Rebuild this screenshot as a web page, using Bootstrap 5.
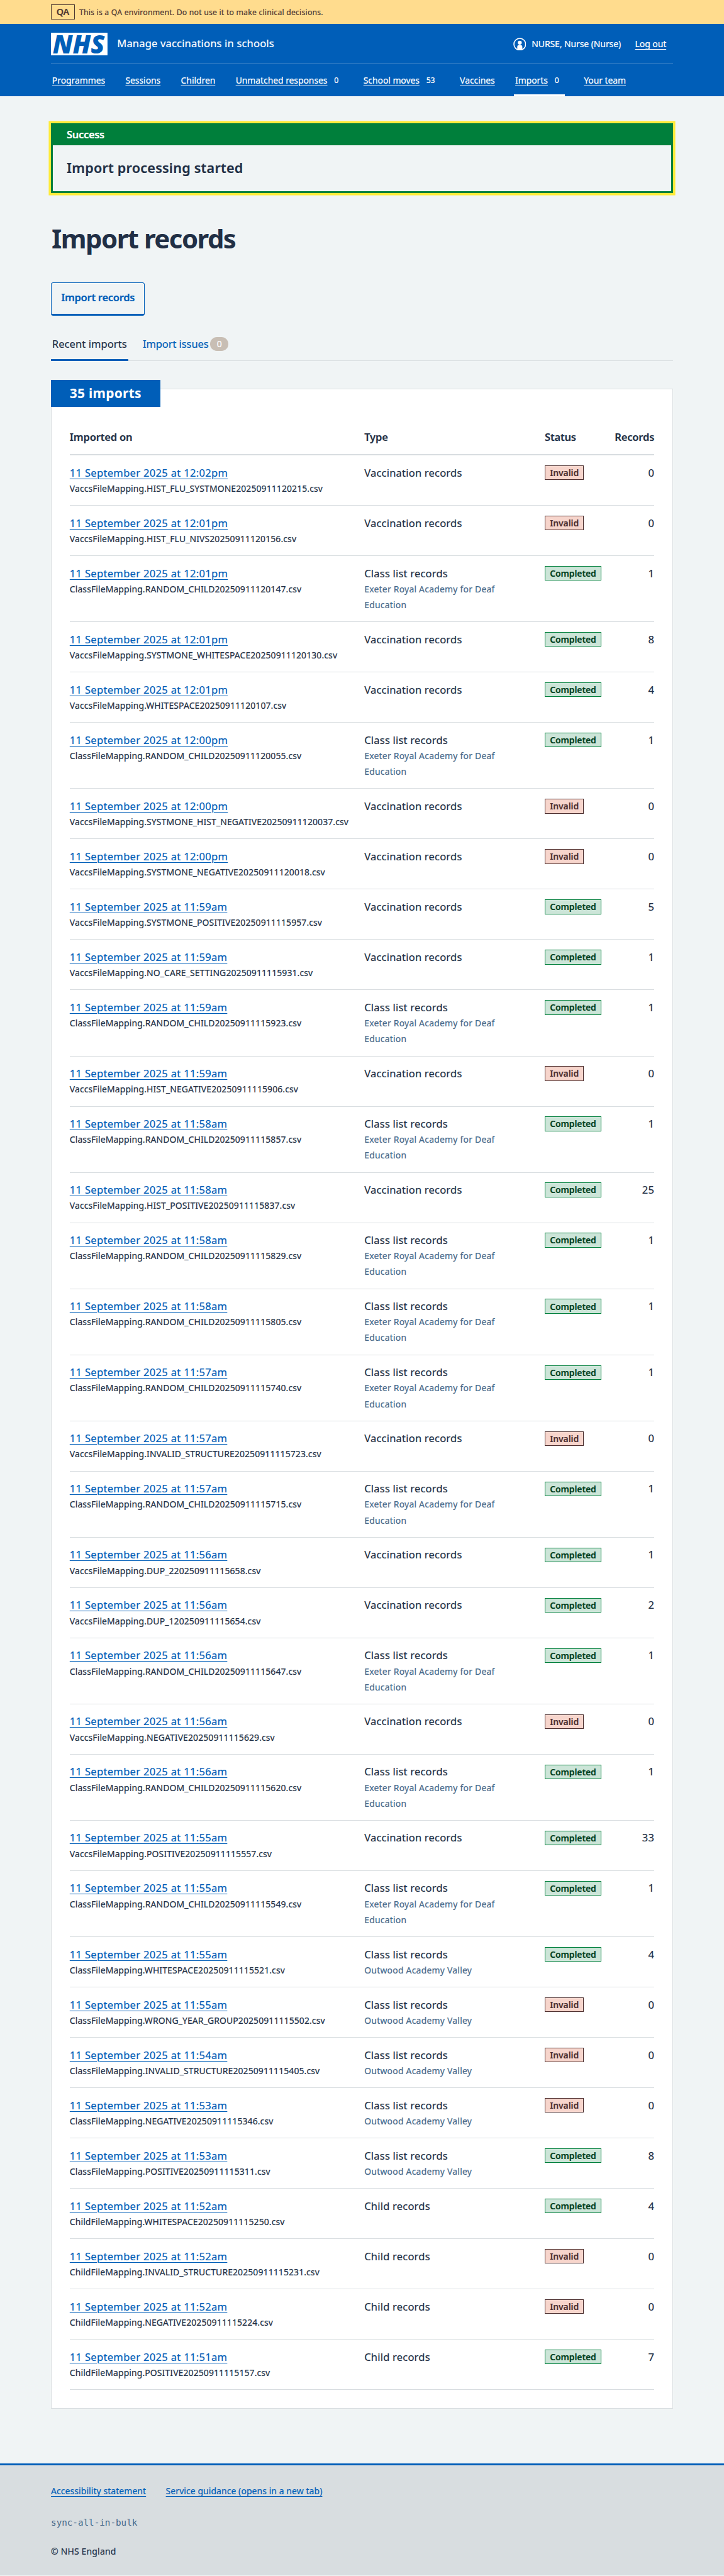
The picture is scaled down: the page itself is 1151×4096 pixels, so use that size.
<!DOCTYPE html>
<html lang="en">
<head>
<meta charset="utf-8">
<meta name="viewport" content="width=device-width, initial-scale=1">
<title>Import records - Manage vaccinations in schools</title>
<link href="https://cdn.jsdelivr.net/npm/bootstrap@5.3.0/dist/css/bootstrap.min.css" rel="stylesheet">
<script src="https://cdn.jsdelivr.net/npm/bootstrap@5.3.0/dist/js/bootstrap.bundle.min.js"></script>
<style>
:root{font-size:8.99px;--blue:#005eb8;--ink:#212f45;--line:#d8dde0;--hint:#47698a}
body{font-family:"Noto Sans","Open Sans",sans-serif;font-size:1.843rem;line-height:2.8rem;letter-spacing:.0115em;color:var(--ink);background:#f0f4f5;overflow-x:hidden;-webkit-text-stroke:.2px}
a{color:var(--blue);text-decoration-thickness:1px;text-underline-offset:.18em}
.wrap{width:110rem;margin:0 auto}
.fs-s{font-size:1.552rem;line-height:2.4rem}

.env{background:#ffdc8e;color:#4d3530;height:4.2rem}
.env-tag{height:2.6rem;width:4.2rem;border:1px solid #4d3530;font-weight:600;font-size:1.6rem;letter-spacing:-.01em}
.env-text{font-size:1.36rem;letter-spacing:.0171em;margin-left:.8rem;padding-top:.2rem}

.masthead{background:var(--blue);color:#fff}
.masthead a{color:#fff}
.brand-row{height:7.2rem;padding-top:1.6rem;border-bottom:1px solid #4b8ccc}
.nhs{width:10rem;height:4rem;display:block;overflow:visible;-webkit-text-stroke:0}
.service{margin-left:1.7rem;height:4rem;line-height:3.8rem;letter-spacing:.0097em}
.account{height:4rem;padding-right:1.2rem;letter-spacing:-.0047em}
.account svg{width:2.3rem;height:2.3rem;margin-right:1rem}
.account a{margin-left:2.5rem}
.main-nav{height:5.6rem;gap:3.2rem;letter-spacing:-.004em}
.main-nav .item{padding:0 .2rem;border-top:.4rem solid transparent;border-bottom:.4rem solid transparent}
.main-nav .item.current{border-bottom-color:#fff}
.main-nav .num{font-size:1.36rem;margin:0 .8rem 0 1.2rem;text-decoration:none}

.banner{margin-top:4.8rem;height:12.3rem;border:.4rem solid #007f3b;border-top:0;box-shadow:0 0 0 .4rem #ffeb3b}
.banner-head{background:#007f3b;color:#fff;height:3.9rem;padding-left:2.45rem;font-weight:600;letter-spacing:-.022em}
.banner-body{height:8rem;padding-left:2.45rem;font-size:2.4rem;font-weight:600;letter-spacing:.0105em}
h1.title{margin:5.3rem 0 0;font-size:4.66rem;line-height:5.6rem;font-weight:700;letter-spacing:-.036em;padding-left:.1rem;-webkit-text-stroke:0}
.btn-outline-nhs{margin-top:4.9rem;width:16.6rem;height:6rem;border:.2rem solid var(--blue);border-bottom-width:.4rem;border-radius:.4rem;color:var(--blue);font-size:1.843rem;font-weight:600;letter-spacing:-.018em;padding:0 0 .2rem}
.tabs{margin-top:2.4rem;height:5.6rem;border-bottom:1px solid var(--line);gap:2.4rem;letter-spacing:.0035em}
.tabs .tab{height:5.6rem;padding:0 .2rem .2rem;border-bottom:.4rem solid transparent;color:var(--ink);text-decoration:none}
.tabs .tab.current{border-color:var(--blue)}
.tabs .tab.other{color:var(--blue);letter-spacing:-.006em}
.pill{background:#c8beb4;color:#fff;width:3.2rem;height:2.4rem;border-radius:1.2rem;margin-left:.3rem}

.panel{margin-top:4.8rem;background:#fff;border:1px solid var(--line);padding:0 3.2rem 3.2rem}
.panel-label{margin:-1.6rem 0 0 calc(-3.2rem - 1px);width:19.3rem;height:4.8rem;padding-left:3.3rem;background:var(--blue);color:#fff;font-size:2.33rem;font-weight:700;letter-spacing:.0137em;-webkit-text-stroke:0}
.head-row{height:8.57rem;padding-top:3.9rem;border-bottom:2px solid var(--line);font-weight:600;letter-spacing:-.0106em}
.rec{height:8.9rem;padding-top:1.6rem;border-bottom:1px solid var(--line)}
.rec.tall{height:11.69rem}
.c1{width:52.1rem}.c2{width:31.9rem;padding-right:3.2rem}.c3{width:10rem}.c4{flex:1}
.rec .when{letter-spacing:.0183em}
.file{font-size:1.552rem;letter-spacing:.008em}
.school{font-size:1.552rem;letter-spacing:.0164em;color:var(--hint)}
.tag{height:2.6rem;margin-top:.15rem;padding:0 .8rem;border:1px solid;font-size:1.552rem;font-weight:600;letter-spacing:-.0047em}
.tag-ok{background:#cce5d8;color:#00401e;border-color:#007f3b}
.tag-bad{background:#f7d5cc;color:#4d2f2f;border-color:#4d2f2f}

.foot{margin-top:9.64rem;background:#d8dde0;border-top:.4rem solid var(--blue);height:19.85rem;padding-top:3.4rem}
.foot .links{gap:3.5rem;letter-spacing:.006em}
.foot .branch{margin-top:3.25rem;font-family:"DejaVu Sans Mono",monospace;font-size:1.587rem;letter-spacing:0;color:var(--hint);-webkit-text-stroke:0}
.foot .copy{margin-top:2.65rem}
</style>
</head>
<body>
<div class="env"><div class="wrap h-100 d-flex align-items-center">
  <span class="env-tag d-flex align-items-center justify-content-center">QA</span>
  <span class="env-text">This is a QA environment. Do not use it to make clinical decisions.</span>
</div></div>

<header class="masthead"><div class="wrap">
  <div class="brand-row d-flex align-items-start">
    <svg class="nhs" viewBox="0 0 100 40" role="img" aria-label="NHS"><rect width="100" height="40" fill="#fff"/><text x="3" y="36.8" font-family="'Open Sans','Noto Sans',sans-serif" font-weight="800" font-style="italic" font-size="46" textLength="92" lengthAdjust="spacingAndGlyphs" fill="#005eb8" letter-spacing="0">NHS</text></svg>
    <div class="service">Manage vaccinations in schools</div>
    <div class="account fs-s ms-auto d-flex align-items-center">
      <svg viewBox="0 0 23 23" fill="none"><circle cx="11.5" cy="11.5" r="10.4" stroke="#fff" stroke-width="1.8"/><circle cx="11.5" cy="8.7" r="3.5" fill="#fff"/><path d="M7 20.5V16.5a3.6 3.6 0 0 1 3.6-3.6h1.8a3.6 3.6 0 0 1 3.6 3.6v4a10 10 0 0 1-9 0z" fill="#fff"/></svg>
      <span>NURSE, Nurse (Nurse)</span><a href="#">Log out</a>
    </div>
  </div>
  <nav class="main-nav fs-s d-flex">
    <div class="item d-flex align-items-center"><a href="#">Programmes</a></div>
    <div class="item d-flex align-items-center"><a href="#">Sessions</a></div>
    <div class="item d-flex align-items-center"><a href="#">Children</a></div>
    <div class="item d-flex align-items-center"><a href="#">Unmatched responses</a><span class="num">0</span></div>
    <div class="item d-flex align-items-center"><a href="#">School moves</a><span class="num">53</span></div>
    <div class="item d-flex align-items-center"><a href="#">Vaccines</a></div>
    <div class="item current d-flex align-items-center"><a href="#">Imports</a><span class="num">0</span></div>
    <div class="item d-flex align-items-center"><a href="#">Your team</a></div>
  </nav>
</div></header>

<main class="wrap">
  <div class="banner" role="alert">
    <div class="banner-head d-flex align-items-center">Success</div>
    <div class="banner-body d-flex align-items-center">Import processing started</div>
  </div>
  <h1 class="title">Import records</h1>
  <a class="btn btn-outline-nhs d-flex align-items-center justify-content-center" href="#">Import records</a>
  <nav class="tabs d-flex">
    <a class="tab current d-flex align-items-center" href="#">Recent imports</a>
    <a class="tab other d-flex align-items-center" href="#">Import issues<span class="pill fs-s d-flex align-items-center justify-content-center">0</span></a>
  </nav>
  <section class="panel">
    <h2 class="panel-label d-flex align-items-center">35 imports</h2>
    <div role="table">
      <div class="head-row d-flex" role="row"><div class="c1">Imported on</div><div class="c2">Type</div><div class="c3">Status</div><div class="c4 text-end">Records</div></div>
      <div id="rows"></div>
    </div>
  </section>
</main>

<footer class="foot"><div class="wrap fs-s">
  <div class="links d-flex"><a href="#">Accessibility statement</a><a href="#">Service guidance (opens in a new tab)</a></div>
  <div class="branch">sync-all-in-bulk</div>
  <div class="copy">© NHS England</div>
</div></footer>

<script>
// time | file kind | file name | records | school (E = Exeter, O = Outwood); "x" records marks an invalid import
const imports = `12:02pm|V|HIST_FLU_SYSTMONE20250911120215|x
12:01pm|V|HIST_FLU_NIVS20250911120156|x
12:01pm|C|RANDOM_CHILD20250911120147|1|E
12:01pm|V|SYSTMONE_WHITESPACE20250911120130|8
12:01pm|V|WHITESPACE20250911120107|4
12:00pm|C|RANDOM_CHILD20250911120055|1|E
12:00pm|V|SYSTMONE_HIST_NEGATIVE20250911120037|x
12:00pm|V|SYSTMONE_NEGATIVE20250911120018|x
11:59am|V|SYSTMONE_POSITIVE20250911115957|5
11:59am|V|NO_CARE_SETTING20250911115931|1
11:59am|C|RANDOM_CHILD20250911115923|1|E
11:59am|V|HIST_NEGATIVE20250911115906|x
11:58am|C|RANDOM_CHILD20250911115857|1|E
11:58am|V|HIST_POSITIVE20250911115837|25
11:58am|C|RANDOM_CHILD20250911115829|1|E
11:58am|C|RANDOM_CHILD20250911115805|1|E
11:57am|C|RANDOM_CHILD20250911115740|1|E
11:57am|V|INVALID_STRUCTURE20250911115723|x
11:57am|C|RANDOM_CHILD20250911115715|1|E
11:56am|V|DUP_220250911115658|1
11:56am|V|DUP_120250911115654|2
11:56am|C|RANDOM_CHILD20250911115647|1|E
11:56am|V|NEGATIVE20250911115629|x
11:56am|C|RANDOM_CHILD20250911115620|1|E
11:55am|V|POSITIVE20250911115557|33
11:55am|C|RANDOM_CHILD20250911115549|1|E
11:55am|C|WHITESPACE20250911115521|4|O
11:55am|C|WRONG_YEAR_GROUP20250911115502|x|O
11:54am|C|INVALID_STRUCTURE20250911115405|x|O
11:53am|C|NEGATIVE20250911115346|x|O
11:53am|C|POSITIVE20250911115311|8|O
11:52am|H|WHITESPACE20250911115250|4
11:52am|H|INVALID_STRUCTURE20250911115231|x
11:52am|H|NEGATIVE20250911115224|x
11:51am|H|POSITIVE20250911115157|7`;
const kinds = {V:["VaccsFileMapping","Vaccination records"],C:["ClassFileMapping","Class list records"],H:["ChildFileMapping","Child records"]};
const schools = {E:"Exeter Royal Academy for Deaf Education",O:"Outwood Academy Valley"};
document.getElementById("rows").innerHTML = imports.split("\n").map(line => {
  const [time, kind, file, count, school] = line.split("|");
  const bad = count === "x";
  return `<div class="rec d-flex align-items-start${school === "E" ? " tall" : ""}" role="row">
    <div class="c1"><div><a class="when" href="#">11 September 2025 at ${time}</a></div><div class="file">${kinds[kind][0]}.${file}.csv</div></div>
    <div class="c2"><div>${kinds[kind][1]}</div>${school ? `<div class="school">${schools[school]}</div>` : ""}</div>
    <div class="c3 d-flex"><span class="tag d-flex align-items-center ${bad ? "tag-bad" : "tag-ok"}">${bad ? "Invalid" : "Completed"}</span></div>
    <div class="c4 text-end">${bad ? 0 : count}</div></div>`;
}).join("");
</script>
</body>
</html>
